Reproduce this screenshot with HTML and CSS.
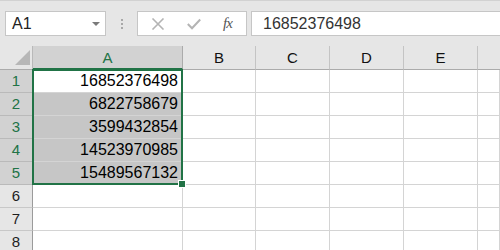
FILE: index.html
```html
<!doctype html>
<html lang="en">

<head>
    <meta charset="UTF-8" />
    <title>Sheet</title>
    <link rel="stylesheet" href="styles.css">
</head>

<body>
    <div class="toolbar">
        <div class="namebox">
            <span class="cellref">A1</span>
            <span class="drop"></span>
        </div>
        <div class="grip"><i></i><i></i><i></i></div>
        <div class="fbuttons">
            <svg class="btn" width="14" height="12" viewBox="0 0 14 12">
                <path d="M1.5 0.5 L12.5 11.5 M12.5 0.5 L1.5 11.5" stroke="#b4b4b4" stroke-width="1.6" fill="none" />
            </svg>
            <svg class="btn" width="14" height="12" viewBox="0 0 14 12">
                <path d="M0.8 6 L5 10.2 L13.2 1.5" stroke="#b4b4b4" stroke-width="2" fill="none" />
            </svg>
            <span class="fx">fx</span>
        </div>
        <div class="formula">16852376498</div>
    </div>

    <div class="sheet">
        <div class="corner"><span class="tri"></span></div>
        <div class="colhead active">A</div>
        <div class="colhead">B</div>
        <div class="colhead">C</div>
        <div class="colhead">D</div>
        <div class="colhead">E</div>
        <div class="colhead last"></div>

        <div class="rowhead sel">1</div>
        <div class="cell num">16852376498</div>
        <div class="cell"></div><div class="cell"></div><div class="cell"></div><div class="cell"></div><div class="cell"></div>

        <div class="rowhead sel">2</div>
        <div class="cell num fill">6822758679</div>
        <div class="cell"></div><div class="cell"></div><div class="cell"></div><div class="cell"></div><div class="cell"></div>

        <div class="rowhead sel">3</div>
        <div class="cell num fill">3599432854</div>
        <div class="cell"></div><div class="cell"></div><div class="cell"></div><div class="cell"></div><div class="cell"></div>

        <div class="rowhead sel">4</div>
        <div class="cell num fill">14523970985</div>
        <div class="cell"></div><div class="cell"></div><div class="cell"></div><div class="cell"></div><div class="cell"></div>

        <div class="rowhead sel">5</div>
        <div class="cell num fill">15489567132</div>
        <div class="cell"></div><div class="cell"></div><div class="cell"></div><div class="cell"></div><div class="cell"></div>

        <div class="rowhead">6</div>
        <div class="cell"></div><div class="cell"></div><div class="cell"></div><div class="cell"></div><div class="cell"></div><div class="cell"></div>

        <div class="rowhead">7</div>
        <div class="cell"></div><div class="cell"></div><div class="cell"></div><div class="cell"></div><div class="cell"></div><div class="cell"></div>

        <div class="rowhead">8</div>
        <div class="cell"></div><div class="cell"></div><div class="cell"></div><div class="cell"></div><div class="cell"></div><div class="cell"></div>

        <div class="selection"><span class="handle"></span></div>
    </div>
</body>

</html>
```

FILE: styles.css
```css
html,
body {
    margin: 0;
    padding: 0;
    width: 500px;
    height: 250px;
    overflow: hidden;
    background: #ffffff;
    font-family: "Liberation Sans", Arial, sans-serif;
}

.toolbar {
    box-sizing: border-box;
    height: 46px;
    background: #e6e6e6;
    border-top: 1px solid #d2d2d2;
    padding: 10px 0 0 5px;
    display: flex;
    align-items: flex-start;
}

.namebox {
    box-sizing: border-box;
    width: 101px;
    height: 25px;
    background: #fff;
    border: 1px solid #c6c6c6;
    display: flex;
    align-items: center;
    justify-content: space-between;
    padding: 0 5px 0 6px;
}

.cellref {
    font-size: 16px;
    color: #222;
}

.drop {
    width: 0;
    height: 0;
    border-left: 4px solid transparent;
    border-right: 4px solid transparent;
    border-top: 4px solid #7a7a7a;
}

.grip {
    width: 31px;
    height: 25px;
    display: flex;
    flex-direction: column;
    align-items: center;
    justify-content: center;
    gap: 2px;
}

.grip i {
    display: block;
    width: 2px;
    height: 2px;
    background: #a8a8a8;
}

.fbuttons {
    box-sizing: border-box;
    width: 110px;
    height: 25px;
    background: #fff;
    border: 1px solid #c6c6c6;
    display: flex;
    align-items: center;
    padding-left: 13px;
    gap: 22px;
}

.fx {
    font-family: "Liberation Serif", "Times New Roman", serif;
    font-style: italic;
    font-size: 15px;
    color: #555;
    letter-spacing: -1px;
    margin-left: 0;
}

.formula {
    box-sizing: border-box;
    flex: 1;
    height: 25px;
    margin-left: 4px;
    margin-right: -2px;
    background: #fff;
    border: 1px solid #c6c6c6;
    font-size: 16px;
    color: #333;
    line-height: 23px;
    padding-left: 11px;
}

.sheet {
    position: relative;
    display: grid;
    grid-template-columns: 33px 150px 73px 74px 74px 74px 1fr;
    grid-template-rows: 24px repeat(8, 23px);
}

.corner {
    position: relative;
    background: #e6e6e6;
    border-right: 1px solid #b9b9b9;
    border-bottom: 1px solid #ababab;
}

.tri {
    position: absolute;
    left: 15px;
    top: 4px;
    width: 0;
    height: 0;
    border-left: 15px solid transparent;
    border-bottom: 15px solid #b7b7b7;
}

.colhead {
    box-sizing: border-box;
    background: #e6e6e6;
    border-bottom: 1px solid #ababab;
    border-right: 1px solid #c4c4c4;
    font-size: 15px;
    color: #111;
    text-align: center;
    line-height: 24px;
    background-clip: padding-box;
}

.colhead.active {
    background: #d2d2d2;
    color: #217346;
    border-bottom: 2px solid #217346;
    border-right-color: #ababab;
    line-height: 23px;
}

.colhead.last {
    border-right: none;
}

.rowhead {
    box-sizing: border-box;
    background: #e6e6e6;
    border-right: 1px solid #9b9b9b;
    border-bottom: 1px solid #c8c8c8;
    font-size: 15px;
    color: #1e1e1e;
    text-align: center;
    line-height: 22px;
}

.rowhead.sel {
    background: #d2d2d2;
    color: #217346;
    border-bottom-color: #bababa;
}

.cell {
    box-sizing: border-box;
    border-right: 1px solid #d4d4d4;
    border-bottom: 1px solid #d4d4d4;
    font-size: 16px;
    color: #000;
    line-height: 22px;
}

.cell.num {
    text-align: right;
    padding-right: 4px;
}

.cell.fill {
    background: #c6c6c6;
}

.selection {
    position: absolute;
    left: 32px;
    top: 23px;
    width: 151px;
    height: 116px;
    box-sizing: border-box;
    border: 2px solid #217346;
    pointer-events: none;
}

.handle {
    position: absolute;
    right: -5px;
    bottom: -5px;
    width: 6px;
    height: 6px;
    background: #217346;
    border: 1px solid #fff;
}
```
